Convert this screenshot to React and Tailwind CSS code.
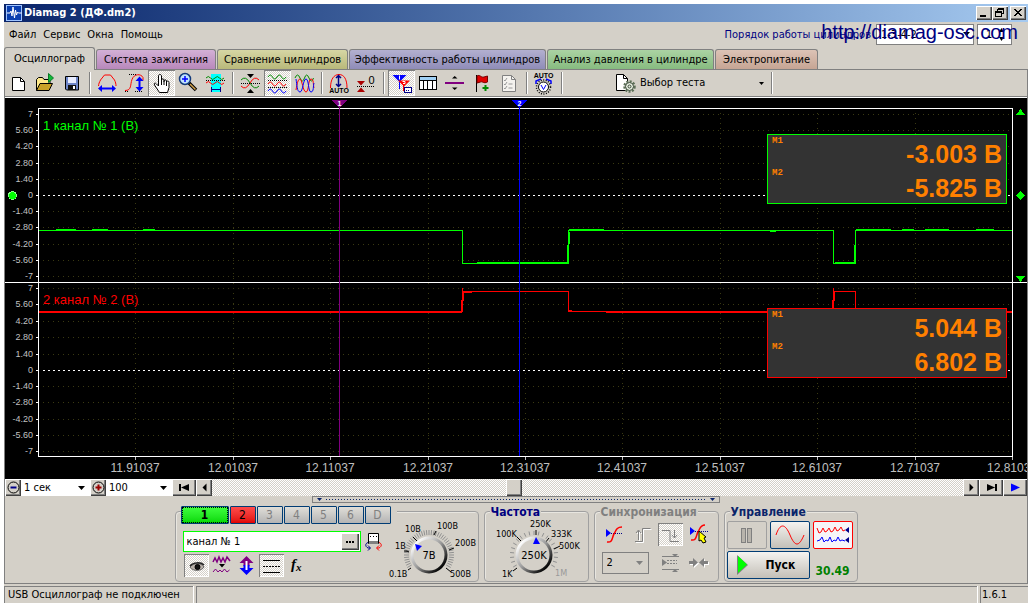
import React from "react";

const RAISED =
  "bg-[#d4d0c8] shadow-[inset_1px_1px_0_#fff,inset_-1px_-1px_0_#404040,inset_-2px_-2px_0_#808080]";
const PRESSED =
  "bg-[image:repeating-conic-gradient(#fff_0_25%,#d4d0c8_0_50%)] bg-[length:2px_2px] shadow-[inset_1px_1px_0_#808080,inset_-1px_-1px_0_#fff]";
const UI_FONT = "font-['DejaVu_Sans_Condensed','DejaVu_Sans',sans-serif]";
const SANS = "font-['Liberation_Sans',Arial,sans-serif]";

/* ---------- title bar and menu ---------- */

function TitleButton({ label, children }) {
  return (
    <button type="button" aria-label={label} className={`h-[14px] w-4 ${RAISED}`}>
      <svg width="16" height="14" viewBox="0 0 16 14" fill="none" stroke="#000" shapeRendering="crispEdges">
        {children}
      </svg>
    </button>
  );
}

function TitleBar() {
  return (
    <header className="flex h-[18px] items-center bg-linear-to-r from-[#0a246a] to-[#a6caf0] pr-[2px] pl-[2px]">
      <svg width="16" height="16" viewBox="0 0 16 16" aria-hidden="true">
        <rect x="0.5" y="0.5" width="15" height="15" fill="#0a3fb0" stroke="#9fc4ff" />
        <path d="M1 8h3l1-2 1 5 1-9 1.500 11 1-8 1 5 1-3 1 1h3" fill="none" stroke="#fff" />
      </svg>
      <h1 className="ml-[2px] flex-1 text-[11px] leading-4 font-bold text-white">Diamag 2 (ДФ.dm2)</h1>
      <TitleButton label="Свернуть">
        <path d="M4 10.500h6M4 9.500h6" />
      </TitleButton>
      <TitleButton label="Восстановить">
        <path d="M5.500 2.500h6v5h-2M5 3.500h7M5.500 3v2M3.500 5.500h6v5h-6zM3 6.500h7" />
      </TitleButton>
      <span className="w-[2px]" />
      <TitleButton label="Закрыть">
        <path d="M4 3l7 7M5 3l7 7M11 3l-7 7M12 3l-7 7" />
      </TitleButton>
    </header>
  );
}

function MenuBar() {
  return (
    <div className="relative flex h-[25px] items-center pl-[5px]">
      <nav className="flex flex-1 gap-[7px]">
        {["Файл", "Сервис", "Окна", "Помощь"].map((m) => (
          <button key={m} type="button">
            {m}
          </button>
        ))}
      </nav>
      <label htmlFor="order" className="text-[#000080]">
        Порядок работы цилиндров
      </label>
      <div className="relative ml-[5px]">
        <select
          id="order"
          className="block h-[21px] w-[98px] appearance-none border border-[#808080] bg-white pl-1"
        >
          <option>1-3-4-2</option>
        </select>
        <svg className="pointer-events-none absolute top-2 right-1" width="7" height="4" viewBox="0 0 7 4">
          <path d="M0 0h7L3.500 4z" />
        </svg>
      </div>
      <div className="relative mr-4 ml-[3px]">
        <input
          aria-label="Цилиндр"
          defaultValue="1"
          className="block h-[21px] w-[35px] border border-[#808080] bg-white pl-2"
        />
        <svg className="pointer-events-none absolute top-1 right-2" width="5" height="13" viewBox="0 0 5 13">
          <path d="M0 4h5L2.500 0zM0 9h5L2.500 13z" />
        </svg>
      </div>
      <a
        href="http://diamag-osc.com"
        className={`absolute top-[-2px] right-[10px] text-[20px] leading-6 text-[#000080] ${SANS}`}
      >
        http://diamag-osc.com
      </a>
    </div>
  );
}

/* ---------- tabs ---------- */

const TABS = [
  { t: "Система зажигания", c: "w-[120px] from-[#d3b0d6] to-[#b888bb]" },
  { t: "Сравнение цилиндров", c: "w-[131px] from-[#d6d6a4] to-[#b9b97a]" },
  { t: "Эффективность работы цилиндров", c: "w-[197px] from-[#b3b0d0] to-[#8f8cb8]" },
  { t: "Анализ давления в цилиндре", c: "w-[167px] from-[#abd3a3] to-[#87bb80]" },
  { t: "Электропитание", c: "w-[103px] from-[#dcc3b6] to-[#c6a594]" },
];

function Tabs() {
  return (
    <div role="tablist" className="flex h-[23px] items-end gap-px border-b border-[#808080] leading-4">
      <button
        type="button"
        role="tab"
        aria-selected="true"
        className="-mb-px h-[23px] w-[91px] rounded-t-[3px] border border-b-0 border-[#808080] bg-[#d4d0c8] whitespace-nowrap"
      >
        Осциллограф
      </button>
      {TABS.map(({ t, c }) => (
        <button
          key={t}
          type="button"
          role="tab"
          aria-selected="false"
          className={`h-5 rounded-t-[3px] border border-b-0 border-[#808080] bg-linear-to-b whitespace-nowrap ${c}`}
        >
          {t}
        </button>
      ))}
    </div>
  );
}

/* ---------- toolbar ---------- */

function Tool({ label, on, children }) {
  return (
    <button type="button" aria-label={label} className={`h-[26px] w-[27px] shrink-0 ${on ? PRESSED : ""}`}>
      <svg width="27" height="26" viewBox="0 0 27 26" fill="none" stroke="#000">
        {children}
      </svg>
    </button>
  );
}

function Sep() {
  return (
    <span className="flex h-[26px] w-2 shrink-0 justify-center py-[2px]">
      <span className="w-[2px] border-r border-white bg-[#808080]" />
    </span>
  );
}

const wave = (y, a = 2) => `M4 ${y}q2.300 ${-2 * a} 4.500 0t4.500 0t4.500 0t4.500 0`;

const AUTO = "font-['Liberation_Sans',sans-serif] text-[7px] font-bold";

function Toolbar() {
  return (
    <div className="flex h-7 items-start border-b border-white shadow-[inset_0_-1px_0_#808080]">
      <Tool label="Новый">
        <path d="M7.500 7.500h8l4 4v9h-12z" fill="#fff" />
        <path d="M15.500 7.500v4h4" />
      </Tool>
      <Tool label="Открыть">
        <path d="M4.500 20.500v-11l2-2h4l1.500 2h6v4" fill="#ffe98a" />
        <path d="M4.500 20.500l3.500-7h12.500l-3.500 7z" fill="#c9a227" />
        <path d="M16.500 3.500l5 4.500-5 4.500z" fill="#12b83a" stroke="#0a7a25" />
      </Tool>
      <Tool label="Сохранить">
        <path d="M6.500 6.500h13v13.500h-12l-1-1z" fill="#6f86c8" />
        <path d="M9 7h8v6H9z" fill="#e8ecff" stroke="none" />
        <path d="M9 15h8v5H9z" fill="#111" stroke="none" />
        <path d="M14 16h2v3h-2z" fill="#fff" stroke="none" />
      </Tool>
      <Sep />
      <Tool label="Ширина">
        <path d="M4.500 16c0-2 1-4 2-6l4-5h6l4 5c1 2 1.500 4 1.500 6" stroke="#f00" />
        <path d="M6 18.500h14" stroke="#00f" strokeWidth="2" />
        <path d="M4 18.500l4-3.500v7zM22 18.500l-4-3.500v7z" fill="#00f" stroke="none" />
      </Tool>
      <Tool label="Высота">
        <path d="M8 4.500h8M4 21.500h4M14 21.500h8" strokeDasharray="1 1" shapeRendering="crispEdges" />
        <path d="M4 20.500c7 0 5-6 7-11 2-6 9-6 11-2v3" stroke="#f00" />
        <path d="M18.500 9v10" stroke="#00f" strokeWidth="2" />
        <path d="M18.500 6.500l4 4.500h-8zM18.500 21.500l4-4.500h-8z" fill="#00f" stroke="none" />
      </Tool>
      <Tool label="Рука" on>
        <path
          d="M11.500 22.500l-5-7.500c-1-2 1-2.500 2-1l2 2V6c0-2 3-2 3 0v6-2c0-1.500 2.500-1.500 2.500 0v2-1c0-1.500 2.500-1.500 2.500 0v2-1c0-1.500 2.500-1 2.500.5v5l-1.500 5z"
          fill="#fff"
        />
        <path d="M13.500 11v4M16 12v3M18.500 13v3" />
      </Tool>
      <Tool label="Масштаб">
        <path d="M14 13l7 7" strokeWidth="3.500" />
        <path d="M15 14l5.500 5.500" stroke="#d2a24c" strokeWidth="1.500" />
        <circle cx="10" cy="9" r="5.500" fill="#bfe3ff" stroke="#123a7a" strokeWidth="1.500" />
        <path d="M7 9h6M10 6v6" stroke="#00f" strokeWidth="1.500" />
      </Tool>
      <Tool label="Участок">
        <path d="M9 4h10v18H9z" fill="#0ff" stroke="none" />
        <path d={wave(8, 1.5)} stroke="#080" />
        <path d={wave(13, 1.5)} stroke="#f00" />
        <path d="M4 10.500h19" strokeDasharray="1 1" shapeRendering="crispEdges" />
        <path d="M9.500 17v5M18.500 17v5M10 19.500h9" stroke="#008" shapeRendering="crispEdges" />
      </Tool>
      <Sep />
      <Tool label="Совместить">
        <path d="M4 10q4.500-5 9 3t9 3" stroke="#080" />
        <path d="M4 16q4.500 5 9-3t9-3" stroke="#f00" />
        <path d="M4 13.500h19" strokeDasharray="1 1" shapeRendering="crispEdges" />
        <path d="M10 4h7l-3.500 4zM10 23h7l-3.500-4z" fill="#000" stroke="none" />
      </Tool>
      <Tool label="Раздельно" on>
        <path d={wave(7)} stroke="#080" />
        <path d={wave(14)} stroke="#f00" />
        <path d={wave(21)} stroke="#00f" />
        <path d="M4 10.500h19M4 17.500h19" strokeDasharray="1 1" shapeRendering="crispEdges" />
      </Tool>
      <Tool label="Наложить">
        <path d="M4 8q2.500-6 5 0t4.500 0t4.500 0t4.500 0" stroke="#080" />
        <path d="M5 20c1-6 2-11 4-11s3 13 6 13 2-13 5-13 2 6 3 9" stroke="#f00" />
        <path d="M5 9c1 6 1 13 4 13s3-13 6-13 2 13 5 13 2-6 3-9" stroke="#00f" />
      </Tool>
      <Sep />
      <Tool label="Авто амплитуда">
        <path d="M4.500 18c0-9 3.500-13.500 8.500-13.500s8 4.500 8 13.500" stroke="#f00" />
        <path d="M12.500 6v10M10 8l2.500-2.500L15 8M10 14l2.500 2.500L15 14" stroke="#008" strokeWidth="1.500" />
        <text x="13" y="23" textAnchor="middle" className={AUTO} fill="#000" stroke="none">
          AUTO
        </text>
      </Tool>
      <Tool label="Установить ноль">
        <path d="M4 11h8l-4 4.500zM4 22h8l-4-4.500z" fill="#a00" stroke="none" />
        <path d="M4 16.500h18" strokeDasharray="1 1" shapeRendering="crispEdges" />
        <text x="18.500" y="14" textAnchor="middle" className="font-['Liberation_Sans',sans-serif] text-[11px]" fill="#000" stroke="none">
          0
        </text>
      </Tool>
      <Sep />
      <Tool label="Маркеры" on>
        <path d="M4.500 5h14l-7 7z" fill="#00f" stroke="none" />
        <path d="M11.500 8v11" stroke="#00f" />
        <path d="M10 10.500h12l-6 6z" fill="#f00" stroke="none" />
        <path d="M15.500 13v8" stroke="#f00" />
        <path d="M11.500 5.500v4M14.500 11.500h2.500v2h-2" stroke="#fff" />
        <rect x="16.500" y="17.500" width="7" height="5" fill="#fff" stroke="#008" />
        <path d="M18 20.500h4" stroke="#008" strokeDasharray="1 1" />
      </Tool>
      <Tool label="Таблица">
        <g shapeRendering="crispEdges">
          <path d="M4.500 6.500h17v13h-17z" fill="#fff" />
          <path d="M5 7h16v3H5z" fill="#9fd0f5" stroke="none" />
          <path d="M4 10.500h18M8.500 10v10M12.500 10v10M17.500 10v10" />
        </g>
      </Tool>
      <Tool label="Разделить">
        <path d="M3 13h19" stroke="#800080" strokeWidth="2" />
        <path d="M10 8.500h5.500L12.700 6zM10 17.500h5.500L12.700 20z" fill="#000" stroke="none" />
      </Tool>
      <Tool label="Метка">
        <path d="M7.500 5v17" />
        <path d="M8 6c3-2 4 2 7 1l3.500-1v6c-4 2-5-1-7 0l-3.500 1z" fill="#e00000" stroke="#700" />
        <path d="M16.500 15v6M13.500 18h6" stroke="#080" strokeWidth="2" />
      </Tool>
      <Tool label="Список">
        <path d="M6.500 5.500h9l4 4v12h-13z" fill="#f4f2ee" stroke="#808080" />
        <path d="M15.500 5.500v4h4" stroke="#808080" />
        <path d="M8 10l1 1 2-3M8 14l1 1 2-3M8 18l1 1 2-3M12.500 14h4M12.500 18h4" stroke="#999" />
      </Tool>
      <Sep />
      <Tool label="Авто вольтметр">
        <text x="12.500" y="8" textAnchor="middle" className={AUTO} fill="#000" stroke="none">
          AUTO
        </text>
        <path d="M5 14v-3l5-2M20 14v-3l-5-2" stroke="#00f" strokeWidth="1.500" />
        <circle cx="12.500" cy="17" r="7" strokeWidth="1.500" strokeDasharray="1 1.500" />
        <circle cx="12.500" cy="17" r="5" fill="#fff" />
        <path d="M10 15l2.500 4.500L15 15" stroke="#00f" />
      </Tool>
      <Sep />
      <button type="button" className="flex h-[26px] w-[202px] items-center pr-1 pl-[49px] text-left">
        <svg width="22" height="20" viewBox="0 0 22 20" fill="none" stroke="#000">
          <path d="M1.500 1.500h7l4 4v12h-11z" fill="#fff" />
          <path d="M8.500 1.500v4h4" />
          <circle cx="14.500" cy="13.500" r="5" fill="#dfe8d8" stroke="#5d7058" strokeWidth="2.500" strokeDasharray="2 1.300" />
          <circle cx="14.500" cy="13.500" r="4" fill="#e6eee0" stroke="#3c4a3a" />
          <circle cx="14.500" cy="13.500" r="1.500" stroke="#3c4a3a" />
        </svg>
        <span className="ml-[3px] flex-1">Выбор теста</span>
        <svg width="5" height="3" viewBox="0 0 5 3">
          <path d="M0 0h5L2.500 3z" />
        </svg>
      </button>
      <Sep />
    </div>
  );
}

/* ---------- oscillogram ---------- */

const LEVELS = ["7", "5.60", "4.20", "2.80", "1.40", "0", "-1.40", "-2.80", "-4.20", "-5.60", "-7"];
const Y1 = [114, 130, 146, 163, 179, 195, 211, 227, 244, 260, 276];
const Y2 = [288, 304, 321, 337, 354, 370, 386, 402, 419, 435, 451];
const TIMES = [
  [135, "11.91037"],
  [233, "12.01037"],
  [330, "12.11037"],
  [428, "12.21037"],
  [525, "12.31037"],
  [622, "12.41037"],
  [720, "12.51037"],
  [817, "12.61037"],
  [915, "12.71037"],
  [1012, "12.81037"],
];

function Levels({ ys }) {
  return ys.map((y, i) => (
    <g key={y}>
      {i === 5 ? (
        <path d={`M43 ${y}.5H1012`} stroke="#fff" strokeDasharray="2 3" />
      ) : (
        <path d={`M43 ${y}.5H1012`} stroke="#3a3a12" strokeDasharray="1 4" />
      )}
      <path d={`M36 ${y}.5h2`} stroke="#fff" />
      <text x="33" y={y + 3} textAnchor="end" fill="#c0c0c0" stroke="none" className="text-[9px]">
        {LEVELS[i]}
      </text>
    </g>
  ));
}

function Readout({ place, m1, m2 }) {
  const dt = "font-['Liberation_Mono',monospace] text-[9px] leading-[9px] font-bold";
  const dd = "pt-1 text-right text-[25px] leading-[30px] font-bold";
  return (
    <dl
      className={`absolute right-5 grid h-[70px] w-[240px] grid-cols-[auto_1fr] grid-rows-2 border bg-[#333] px-1 text-[#ff8000] ${place}`}
    >
      <dt className={`pt-[2px] ${dt}`}>M1</dt>
      <dd className={dd}>{m1}</dd>
      <dt className={dt}>M2</dt>
      <dd className={dd}>{m2}</dd>
    </dl>
  );
}

function Chart() {
  return (
    <div className={`relative bg-black ${SANS}`}>
      <svg viewBox="5 98 1022 381" className="block w-full" fill="none" shapeRendering="crispEdges">
        <Levels ys={Y1} />
        <Levels ys={Y2} />
        {TIMES.map(([x, t]) => (
          <g key={x}>
            {x < 1012 && <path d={`M${x}.5 113V456`} stroke="#3a3a12" strokeDasharray="1 4" />}
            <path d={`M${x}.5 457v3`} stroke="#c0c0c0" />
            <text x={x} y="472" textAnchor="middle" fill="#c0c0c0" className="text-[12px]">
              {t}
            </text>
          </g>
        ))}
        <path d="M38.500 456.500V108.500H1012.500V456.500z" stroke="#fff" />
        <path d="M5 282.500H1027" stroke="#fff" />
        <text x="43" y="130" fill="#0f0" className="text-[13px]">
          1 канал № 1 (В)
        </text>
        <text x="43" y="304" fill="#f00" className="text-[13px]">
          2 канал № 2 (В)
        </text>
        <path
          d="M39 230.500H462.500V263.500H568.500V230.500H833.500V263.500H855.500V230.500H1012"
          stroke="#0f0"
        />
        <path
          d="M56 229.500h20M92 229.500h16M143 229.500h12M569 229.500h35M477 262.500h90M835 262.500h20M856 229.500h35M902 229.500h12M925 229.500h24M976 229.500h18M770 231.500h6M568.500 230v33"
          stroke="#0f0"
        />
        <path d="M567.500 245v18M854.500 245v18M569.500 232v12" stroke="#0f0" />
        <path
          d="M39 311.500H462.500V288v3.500H568.500V311.500H833.500V288v3.500H855.500V311.500H1012"
          stroke="#f00"
        />
        <path
          d="M39 312.500h423M606 312.500h227M856 312.500h156M463 292.500h9M569 310.500h3M461.500 300v12M463.500 291v10M832.500 300v12M834.500 291v10"
          stroke="#f00"
        />
        <path d="M339.500 100V456" stroke="#800080" />
        <path d="M519.500 100V456" stroke="#00f" />
        <path d="M332 100h15l-7.500 8z" fill="#800080" />
        <path d="M512 100h15l-7.500 8z" fill="#00f" />
        <text x="339.500" y="106" textAnchor="middle" fill="#fff" className="text-[7px] font-bold">
          1
        </text>
        <text x="519.500" y="106" textAnchor="middle" fill="#fff" className="text-[7px] font-bold">
          2
        </text>
        <circle cx="12.500" cy="195.500" r="4" fill="#0f0" stroke="#8f8" />
        <path
          d="M1020.500 191l4.500 4.500-4.500 4.500-4.500-4.500zM1016 276h9l-4.500 6zM1016 115h9l-4.500-6z"
          fill="#0f0"
        />
      </svg>
      <Readout place="top-9 border-[#0f0]" m1="-3.003 В" m2="-5.825 В" />
      <Readout place="top-[210px] border-[#f00]" m1="5.044 В" m2="6.802 В" />
    </div>
  );
}

/* ---------- time scale row ---------- */

function FlatSelect({ label, width, value }) {
  return (
    <div className="relative">
      <select aria-label={label} className={`block h-[17px] appearance-none bg-white pl-[3px] ${width}`}>
        <option>{value}</option>
      </select>
      <svg className="pointer-events-none absolute top-[7px] right-[5px]" width="7" height="4" viewBox="0 0 7 4">
        <path d="M0 0h7L3.500 4z" />
      </svg>
    </div>
  );
}

function SmallButton({ label, width, children }) {
  return (
    <button type="button" aria-label={label} className={`flex h-[17px] shrink-0 items-center justify-center ${width} ${RAISED}`}>
      <svg width="15" height="15" viewBox="0 0 15 15" fill="#000">
        {children}
      </svg>
    </button>
  );
}

function TimeRow() {
  return (
    <div className="flex h-[17px] bg-white">
      <SmallButton label="Уменьшить" width="w-4">
        <circle cx="7.500" cy="7.500" r="5.500" fill="none" stroke="#000" />
        <path d="M4.500 6.500h6v2h-6z" fill="#008" />
      </SmallButton>
      <FlatSelect label="Развёртка" width="w-[69px]" value="1 сек" />
      <SmallButton label="Увеличить" width="w-4">
        <circle cx="7.500" cy="7.500" r="5.500" fill="none" stroke="#000" />
        <path d="M4.500 6.500h6v2h-6zM6.500 4.500h2v6h-2z" fill="#900" />
      </SmallButton>
      <FlatSelect label="Масштаб, %" width="w-[66px]" value="100" />
      <SmallButton label="В начало" width="w-6">
        <path d="M2 4h2v7H2zM12 4v7L4 7.500z" />
      </SmallButton>
      <SmallButton label="Назад" width="w-4">
        <path d="M9.500 3.500v8l-4-4z" />
      </SmallButton>
      <input
        type="range"
        aria-label="Прокрутка"
        defaultValue="40"
        className="h-[17px] min-w-0 flex-1 appearance-none bg-[image:repeating-conic-gradient(#fff_0_25%,#d4d0c8_0_50%)] bg-[length:2px_2px] [&::-webkit-slider-thumb]:h-[17px] [&::-webkit-slider-thumb]:w-4 [&::-webkit-slider-thumb]:appearance-none [&::-webkit-slider-thumb]:bg-[#d4d0c8] [&::-webkit-slider-thumb]:shadow-[inset_1px_1px_0_#fff,inset_-1px_-1px_0_#404040,inset_-2px_-2px_0_#808080]"
      />
      <SmallButton label="Вперёд" width="w-4">
        <path d="M5.500 3.500v8l4-4z" />
      </SmallButton>
      <SmallButton label="В конец" width="w-6">
        <path d="M3 4v7l8-3.500zM11 4h2v7h-2z" />
      </SmallButton>
      <SmallButton label="Воспроизвести" width="w-6">
        <path d="M3 3.500v8l9-4z" fill="#00f" />
      </SmallButton>
    </div>
  );
}

/* ---------- control groups ---------- */

function Group({ title, tone, width, children }) {
  return (
    <section
      aria-label={title}
      className={`relative h-[71px] rounded-[4px] border border-[#a0a0a0] shadow-[inset_1px_1px_0_#e8e6e0] ${width}`}
    >
      {title && (
        <h2 className={`absolute -top-[8px] left-[5px] bg-[#d4d0c8] px-px text-[12px] leading-4 font-bold ${tone}`}>
          {title}
        </h2>
      )}
      {children}
    </section>
  );
}

function ticks(cx, cy, r1, r2, from, to, n) {
  let d = "";
  for (let i = 0; i <= n; i++) {
    const a = ((from + ((to - from) * i) / n) * Math.PI) / 180;
    const c = Math.cos(a);
    const s = Math.sin(a);
    d += `M${(cx + r1 * c).toFixed(1)} ${(cy + r1 * s).toFixed(1)}L${(cx + r2 * c).toFixed(1)} ${(cy + r2 * s).toFixed(1)}`;
  }
  return d;
}

function Knob({ id, width, cx, value, pointer, minor, major, labels }) {
  return (
    <svg width={width} height="66" viewBox={`0 0 ${width} 66`} role="img" aria-label={value} className={UI_FONT}>
      <defs>
        <linearGradient id={id} x1="0" y1="0" x2="1" y2="1">
          <stop offset="0.150" stopColor="#fff" />
          <stop offset="0.500" stopColor="#999" />
          <stop offset="0.850" stopColor="#000" />
        </linearGradient>
      </defs>
      <path d={minor} stroke="#909090" />
      <path d={major} stroke="#000" />
      <circle cx={cx} cy="40" r="18.500" fill={`url(#${id})`} />
      <circle cx={cx} cy="40" r="15.500" fill="#d4d0c8" />
      <path d={pointer} fill="#00f" />
      <text x={cx} y="44" textAnchor="middle" className="text-[11px]">
        {value}
      </text>
      {labels.map(([x, y, t, off]) => (
        <text key={t} x={x} y={y} className="text-[9px]" fill={off ? "#999" : "#000"}>
          {t}
        </text>
      ))}
    </svg>
  );
}

const CH_OFF = "border-[#003c74] bg-linear-to-b from-[#e0ded8] to-[#b4b4b4] text-[#808080] w-[26px]";

function PanelIcon({ label, on, children }) {
  return (
    <button type="button" aria-label={label} className={`h-[23px] w-[25px] ${on ? PRESSED : ""}`}>
      <svg width="25" height="23" viewBox="0 0 25 23" fill="none" stroke="#000">
        {children}
      </svg>
    </button>
  );
}

function ChannelGroup() {
  return (
    <Group width="w-[304px]">
      <div className="flex">
        <div className="-mt-[6px] ml-[5px] w-[207px]">
          <div className="flex w-[216px] gap-px bg-[#d4d0c8] text-[12px] leading-4">
            <button
              type="button"
              className="h-[18px] w-12 rounded-[1px] border border-[#003c74] bg-linear-to-b from-[#3dff3d] to-[#00d800] font-bold outline-1 -outline-offset-2 outline-dotted outline-black"
            >
              1
            </button>
            <button
              type="button"
              className="h-[18px] w-[26px] rounded-[1px] border border-[#003c74] bg-linear-to-b from-[#ff4a4a] to-[#e00000]"
            >
              2
            </button>
            {["3", "4", "5", "6", "D"].map((c) => (
              <button key={c} type="button" className={`h-[18px] rounded-[1px] border ${CH_OFF}`}>
                {c}
              </button>
            ))}
          </div>
          <div className="mt-[7px] ml-[2px] flex items-center gap-[3px]">
            <div className="flex h-[21px] w-[178px] items-center border border-[#0f0] bg-white pr-px">
              <input
                aria-label="Имя канала"
                defaultValue="канал № 1"
                className="min-w-0 flex-1 pl-[3px] text-[11px] outline-none"
              />
              <button type="button" aria-label="Выбрать" className={`flex h-[17px] w-[18px] items-center justify-center ${RAISED}`}>
                <svg width="8" height="2" viewBox="0 0 8 2">
                  <path d="M0 0h2v2H0zM3 0h2v2H3zM6 0h2v2H6z" />
                </svg>
              </button>
            </div>
            <svg width="19" height="20" viewBox="0 0 19 20" fill="none" className="shrink-0">
              <path d="M4.500 1.500h10v10h-10z" fill="#fff" stroke="#000" />
              <path d="M5 9h9v3H5z" fill="#808080" />
              <path d="M6 4.500h8" stroke="#000" strokeDasharray="1 2" />
              <path d="M4 10.500c-3 1-3 4 0 5.500h2M4 13.500l2.500 2.500L4 18.500" stroke="#008" />
              <path d="M15 10.500c3 1 3 4 0 5.500h-2M15 13.500l-2.500 2.500 2.500 2.500" stroke="#f00" />
            </svg>
          </div>
          <div className="mt-[2px] ml-[3px] flex">
            <PanelIcon label="Видимость" on>
              <path d="M6 13c3-4 11-5 14 0-2 4-11 5-14 0z" fill="#b8b0a8" stroke="#666" />
              <path d="M6 12c3-4 11-4 14-1" stroke="#222" strokeWidth="1.500" />
              <circle cx="13.500" cy="13" r="2.500" fill="#111" />
            </PanelIcon>
            <PanelIcon label="Фильтр">
              <path d="M4 8l2-4 2 4 2-5 2 5 2-4 2 4 2-5 3 4" stroke="#800080" strokeWidth="1.500" />
              <path d="M4 18l2.500-3 2.500 3 2-2 2 2 2.500-3 2.500 3 2.500-2" stroke="#800080" />
              <path d="M10 10h6l-3 3.500z" fill="#000" stroke="none" />
            </PanelIcon>
            <PanelIcon label="Инверсия">
              <path d="M12.500 2l7 7h-4v3h-6V9h-4z" fill="#800080" stroke="none" />
              <path d="M12.500 21l7-7h-4v-3h-6v3h-4z" fill="#00f" stroke="none" />
              <path d="M12.500 7v9" stroke="#fff" strokeWidth="2" />
            </PanelIcon>
            <PanelIcon label="Линии" on>
              <path d="M4 6.500h17M4 18.500h17" shapeRendering="crispEdges" />
              <path d="M4 12.500h17" strokeDasharray="2 1" shapeRendering="crispEdges" />
            </PanelIcon>
            <PanelIcon label="Функция">
              <text x="7" y="15" className="font-['Liberation_Serif',serif] text-[15px] font-bold italic" fill="#000" stroke="none">
                f
              </text>
              <text x="12" y="17" className="font-['Liberation_Serif',serif] text-[11px] font-bold italic" fill="#000" stroke="none">
                x
              </text>
            </PanelIcon>
          </div>
        </div>
        <div className="mt-[3px]">
          <Knob
            id="volts"
            width={91}
            cx={41}
            value="7В"
            pointer="M27 29l7 2-5 5z"
            minor={ticks(41, 40, 20, 25, 150, 390, 40)}
            major="M20 55l3-2M16 36h3l2 1M25 22l4 4M48 16l-2 4M66 33l-5 2M58 53l5 4"
            labels={[
              [17, 17, "10В"],
              [49, 14, "100В"],
              [67, 31, "200В"],
              [62, 62, "500В"],
              [1, 62, "0.1В"],
              [7, 34, "1В"],
            ]}
          />
        </div>
      </div>
    </Group>
  );
}

function FrequencyGroup() {
  return (
    <Group title="Частота" tone="text-[#000080]" width="w-[105px]">
      <div className="mt-[3px]">
        <Knob
          id="freq"
          width={103}
          cx={49}
          value="250K"
          pointer="M51 22l4 7h-7z"
          minor={ticks(49, 40, 20, 24, 150, 390, 20)}
          major="M28 56l4-3M32 22l4 4M51 15v5M64 23l-4 5M75 31l-6 3"
          labels={[
            [45, 12, "250K"],
            [11, 22, "100K"],
            [66, 22, "333K"],
            [74, 34, "500K"],
            [17, 62, "1K"],
            [70, 61, "1M", true],
          ]}
        />
      </div>
    </Group>
  );
}

function SyncGroup() {
  return (
    <Group title="Синхронизация" tone="text-[#808080]" width="w-[125px]">
      <div className="mt-[11px] ml-[7px] flex gap-[3px]">
        <PanelIcon label="Уровень">
          <path d="M4 6v8l5-4z" fill="#00f" stroke="none" />
          <path d="M9 10.500h12" stroke="#008" strokeDasharray="1 1" />
          <path d="M5 19c6 1 5-5 7-8s2-7 8-7" stroke="#f00" strokeWidth="1.500" />
        </PanelIcon>
        <PanelIcon label="По фронту">
          <path d="M5 18.500h7.500v-13h8M8.500 17V8M6 10l2.500-3L11 10" stroke="#fff" transform="translate(1 1)" />
          <path d="M5 18.500h7.500v-13h8M8.500 17V8M6 10l2.500-3L11 10" stroke="#808080" />
        </PanelIcon>
        <PanelIcon label="По спаду" on>
          <path d="M4 7.500h8v11h9M16.500 7v8M14 12l2.500 3 2.500-3" stroke="#808080" />
        </PanelIcon>
        <PanelIcon label="Указать">
          <path d="M4 4v8l5-4z" fill="#00f" stroke="none" />
          <path d="M9 8.500h13" stroke="#008" strokeDasharray="1 1" />
          <path d="M5 17c6 1 5-5 7-8s2-7 7-7" stroke="#f00" strokeWidth="1.500" />
          <path d="M13 8l7 6-2 1 2 4-3 1-2-3-2 1z" fill="#ff0" />
        </PanelIcon>
      </div>
      <div className="mt-[6px] ml-[7px] flex gap-[3px]">
        <div className="relative mr-[6px]">
          <select
            aria-label="Канал синхронизации"
            className="block h-[22px] w-[47px] appearance-none border border-[#808080] bg-[#d4d0c8] pl-1"
          >
            <option>2</option>
          </select>
          <svg className="pointer-events-none absolute top-[9px] right-[6px]" width="7" height="4" viewBox="0 0 7 4">
            <path d="M0 0h7L3.500 4z" fill="#808080" />
          </svg>
        </div>
        <PanelIcon label="Диапазон">
          <g fill="#808080" stroke="#808080">
            <path d="M4 7v7l5-3.500z" stroke="none" />
            <path d="M4 4.500h17M4 17.500h17" />
            <path d="M9 8.500h10M9 11.500h10" strokeDasharray="2 1" />
            <path d="M14 2h6l-3 3zM14 20h6l-3-3z" stroke="none" />
          </g>
        </PanelIcon>
        <PanelIcon label="Сжать">
          <path d="M3 9h4V6l5 4.500-5 4.500v-3H3zM22 9h-4V6l-5 4.500 5 4.500v-3h4z" fill="#fff" stroke="none" transform="translate(1 1)" />
          <path d="M3 9h4V6l5 4.500-5 4.500v-3H3zM22 9h-4V6l-5 4.500 5 4.500v-3h4z" fill="#808080" stroke="none" />
        </PanelIcon>
      </div>
    </Group>
  );
}

function ControlGroup() {
  const face = "rounded-[2px] border bg-linear-to-b from-[#f4f3f0] to-[#c4c0b8]";
  return (
    <Group title="Управление" tone="text-[#0a246a]" width="w-[134px]">
      <div className="mt-[9px] ml-[2px] grid w-[126px] grid-cols-3 gap-x-[3px] gap-y-[2px]">
        <button type="button" aria-label="Пауза" className="h-7 rounded-[2px] border border-[#a0a0a0]">
          <svg width="38" height="26" viewBox="0 0 38 26" fill="#b8b4ac" stroke="#808080" shapeRendering="crispEdges">
            <path d="M13.500 6.500h4v14h-4zM19.500 6.500h4v14h-4z" />
          </svg>
        </button>
        <button type="button" aria-label="Сигнал" className={`h-7 border-[#003c74] ${face}`}>
          <svg width="38" height="26" viewBox="0 0 38 26" fill="none" stroke="#f00">
            <path d="M5 13c4-12 9-12 14 0s9 12 14 0" />
          </svg>
        </button>
        <button type="button" aria-label="Запись" className="h-7 rounded-[2px] border border-[#f00] bg-[#f6f5f8]">
          <svg width="38" height="26" viewBox="0 0 38 26" fill="none">
            <path d="M3 6l2 5 2-1 2-4 2 4 2-1 2-3 2 4 2-1 2-4 2 4 2-1 2-3 2 4 2-1" stroke="#f00" />
            <path d="M3 19l3-1 2-3 2 5 2-2 2 1 2-4 2 5 2-2 2 1 2-4 2 4 2-1 3 1" stroke="#00f" />
            <path d="M35 5v6l-4-3zM35 15v6l-4-3z" fill="#008" />
          </svg>
        </button>
        <button type="button" className={`col-span-2 flex h-7 items-center border-[#003c74] pl-[9px] text-[12px] font-bold ${face}`}>
          <svg width="11" height="20" viewBox="0 0 11 20">
            <path d="M0 0v20l11-10z" fill="#808080" />
            <path d="M1 1v17l9-8.500z" fill="#0f0" />
          </svg>
          <span className="ml-[18px]">Пуск</span>
        </button>
        <output className="self-end text-center text-[12px] leading-4 font-bold text-[#008000]">30.49</output>
      </div>
    </Group>
  );
}

function Panel() {
  return (
    <div className="pb-px">
      <button
        type="button"
        aria-label="Свернуть панель"
        className="mx-auto flex h-[7px] w-[408px] max-w-full items-center gap-1 border border-[#808080] px-1"
      >
        <svg width="5" height="3" viewBox="0 0 5 3" className="shrink-0">
          <path d="M0 0h5L2.500 3z" fill="#0a246a" />
        </svg>
        <span className="h-px flex-1 bg-[repeating-linear-gradient(90deg,#0a246a_0_1px,transparent_1px_3px)]" />
        <svg width="5" height="3" viewBox="0 0 5 3" className="shrink-0">
          <path d="M0 0h5L2.500 3z" fill="#0a246a" />
        </svg>
      </button>
      <div className="mt-2 flex justify-center gap-[5px]">
        <ChannelGroup />
        <FrequencyGroup />
        <SyncGroup />
        <ControlGroup />
      </div>
    </div>
  );
}

function StatusBar() {
  const cell = "h-[17px] border-t border-l border-[#808080] leading-4 shadow-[1px_0_0_#fff]";
  return (
    <footer className="mt-[2px] flex gap-[3px]">
      <div className={`w-[189px] pl-[3px] ${cell}`}>USB Осциллограф не подключен</div>
      <div className={`flex-1 ${cell}`} />
      <div className={`w-12 pl-px ${cell}`}>1.6.1</div>
    </footer>
  );
}

export default function App() {
  return (
    <div className="bg-white p-1">
      <div className={`bg-[#d4d0c8] text-[11px] leading-[14px] text-black ${UI_FONT}`}>
        <TitleBar />
        <MenuBar />
        <Tabs />
        <main className="border-x border-b border-[#808080]">
          <Toolbar />
          <Chart />
          <TimeRow />
          <Panel />
        </main>
        <StatusBar />
      </div>
    </div>
  );
}
